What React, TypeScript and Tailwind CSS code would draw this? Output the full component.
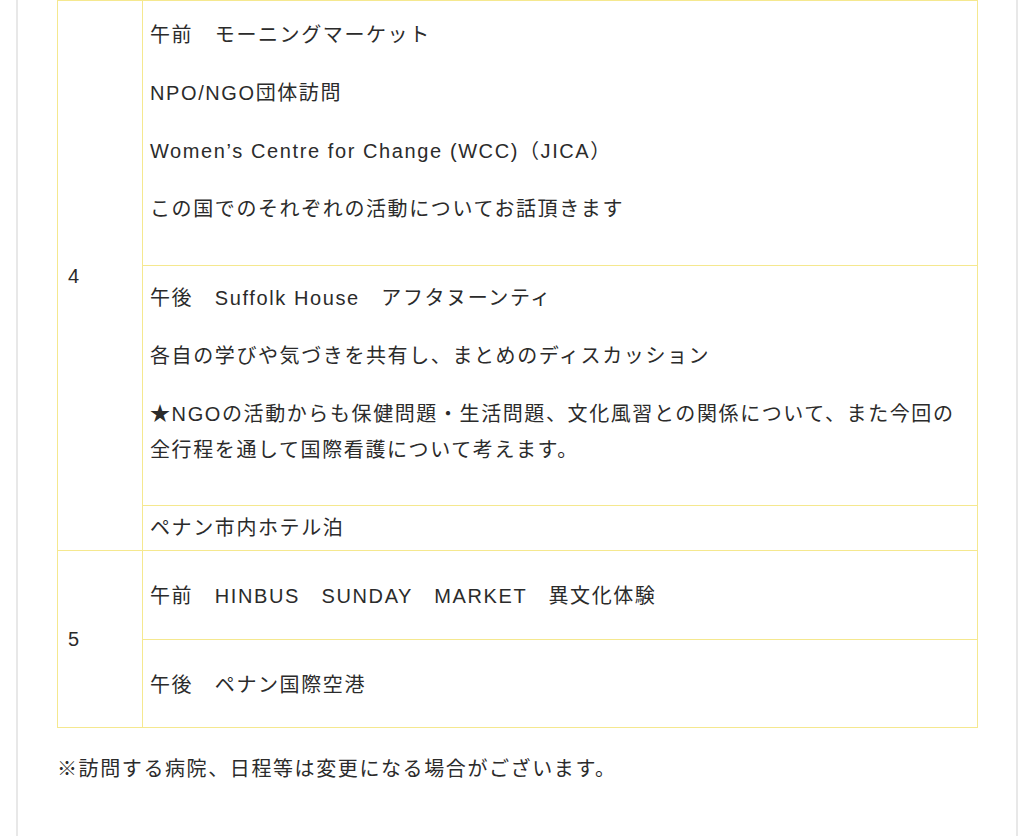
const font = { fontFamily: "'Liberation Sans', 'Noto Sans CJK JP', sans-serif" };

type Cell = {
  lines: string[];
  pad: string;
};

type Day = {
  day: string;
  cells: Cell[];
};

const schedule: Day[] = [
  {
    day: "4",
    cells: [
      {
        lines: [
          "午前　モーニングマーケット",
          "NPO/NGO団体訪問",
          "Women’s Centre for Change (WCC)（JICA）",
          "この国でのそれぞれの活動についてお話頂きます",
        ],
        pad: "pt-[16px] pb-[38px]",
      },
      {
        lines: [
          "午後　Suffolk House　アフタヌーンティ",
          "各自の学びや気づきを共有し、まとめのディスカッション",
          "★NGOの活動からも保健問題・生活問題、文化風習との関係について、また今回の全行程を通して国際看護について考えます。",
        ],
        pad: "pt-[14px] pb-[37px]",
      },
      {
        lines: ["ペナン市内ホテル泊"],
        pad: "pt-[4px] pb-[4px]",
      },
    ],
  },
  {
    day: "5",
    cells: [
      {
        lines: ["午前　HINBUS　SUNDAY　MARKET　異文化体験"],
        pad: "pt-[27px] pb-[25px]",
      },
      {
        lines: ["午後　ペナン国際空港"],
        pad: "pt-[27px] pb-[24px]",
      },
    ],
  },
];

export default function App() {
  return (
    <div className="min-h-screen bg-white text-[#2b2b2b]" style={font}>
      <div className="ml-[16px] mr-[6px] min-h-[836px] border-x-2 border-[#e8e8e8] pl-[39px] pr-[38px]">
        <table className="w-full border-collapse text-[20px] leading-[36px] tracking-[1.6px]">
          <colgroup>
            <col className="w-[85px]" />
            <col />
          </colgroup>
          <tbody>
            {schedule.map((d) =>
              d.cells.map((c, i) => (
                <tr key={`${d.day}-${i}`}>
                  {i === 0 ? (
                    <td
                      rowSpan={d.cells.length}
                      className="border border-[#f5e88f] px-[10px] align-middle"
                    >
                      {d.day}
                    </td>
                  ) : null}
                  <td className={`border border-[#f5e88f] px-[7px] align-top ${c.pad}`}>
                    <div className="flex flex-col gap-[22px]">
                      {c.lines.map((line) => (
                        <p key={line}>{line}</p>
                      ))}
                    </div>
                  </td>
                </tr>
              )),
            )}
          </tbody>
        </table>
        <p className="mt-[23px] text-[20px] leading-[36px] tracking-[1.6px]">
          ※訪問する病院、日程等は変更になる場合がございます。
        </p>
      </div>
    </div>
  );
}
